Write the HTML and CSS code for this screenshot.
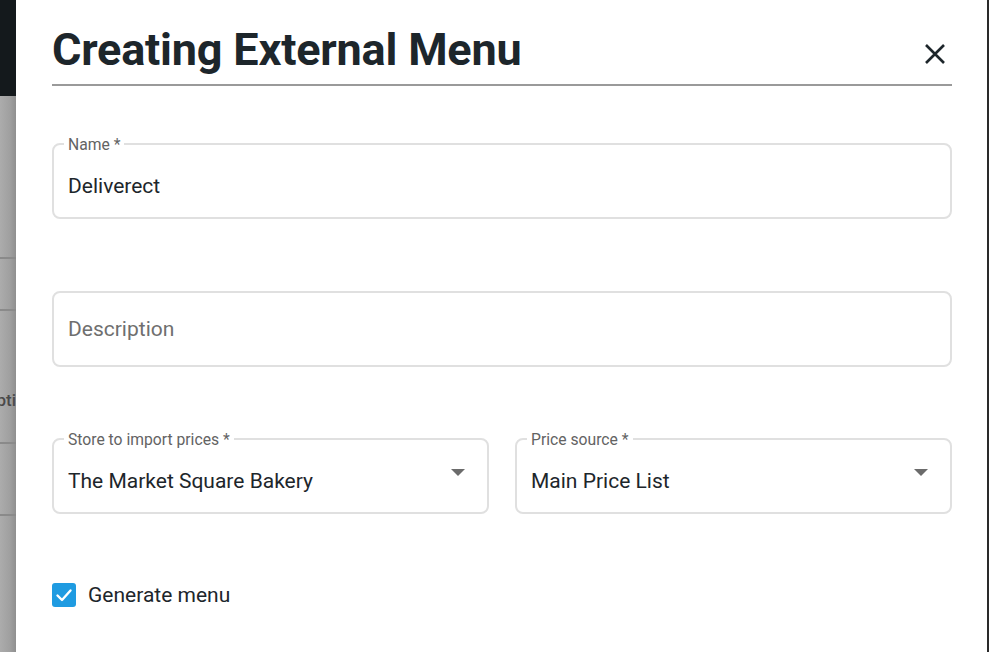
FILE: index.html
```html
<!DOCTYPE html>
<html>
<head>
<meta charset="utf-8">
<link rel="stylesheet" href="styles.css">
</head>
<body>
<div class="page">
  <div class="backdrop">
    <div class="bd-top"></div>
    <div class="bd-rest">
      <div class="bd-row r1"></div>
      <div class="bd-row r2"></div>
      <div class="bd-row r3"><span class="bd-text">pti</span></div>
      <div class="bd-row r4"></div>
      <div class="bd-row r5"></div>
    </div>
  </div>
  <div class="modal">
    <div class="header">
      <h1 class="title">Creating External Menu</h1>
      <button class="close" aria-label="Close">
        <svg width="22" height="22" viewBox="0 0 22 22"><path d="M2 2 L20 20 M20 2 L2 20" stroke="#1d262b" stroke-width="2.6" stroke-linecap="butt" fill="none"/></svg>
      </button>
    </div>
    <div class="form">
      <div class="field filled">
        <span class="label">Name *</span>
        <span class="value">Deliverect</span>
      </div>
      <div class="field">
        <span class="placeholder">Description</span>
      </div>
      <div class="row">
        <div class="field filled select">
          <span class="label">Store to import prices *</span>
          <span class="value">The Market Square Bakery</span>
          <span class="arrow"></span>
        </div>
        <div class="field filled select">
          <span class="label">Price source *</span>
          <span class="value">Main Price List</span>
          <span class="arrow"></span>
        </div>
      </div>
      <label class="check">
        <span class="box">
          <svg width="24" height="24" viewBox="0 0 24 24"><path d="M5.5 12.5 L10 17 L18.5 7.5" stroke="#fff" stroke-width="2.4" fill="none" stroke-linecap="round" stroke-linejoin="round"/></svg>
        </span>
        <span class="check-text">Generate menu</span>
      </label>
    </div>
  </div>
  <div class="edge"></div>
</div>
</body>
</html>
```
FILE: styles.css
```css
* { box-sizing: border-box; }
html, body { margin: 0; padding: 0; }
body {
  width: 990px;
  height: 652px;
  overflow: hidden;
  font-family: Roboto, "Liberation Sans", sans-serif;
  background: #fff;
}
.page {
  display: flex;
  height: 652px;
}
.backdrop {
  width: 16px;
  flex: none;
  display: flex;
  flex-direction: column;
  overflow: hidden;
}
.bd-top {
  height: 96px;
  background: #14191c;
}
.bd-rest {
  flex: 1;
  background: linear-gradient(to right, #acacac, #a0a0a0 60%, #8f8f8f);
  display: flex;
  flex-direction: column;
}
.bd-row {
  border-bottom: 2px solid #8a8a8a;
  position: relative;
}
.r1 { height: 163px; }
.r2 { height: 52px; }
.r3 { height: 133px; }
.r4 { height: 72px; }
.r5 { height: 0; border: none; }
.bd-text {
  position: absolute;
  right: 0;
  top: 79px;
  font-size: 17px;
  font-weight: 500;
  color: #4a4a4a;
  line-height: 20px;
}
.modal {
  width: 971px;
  flex: none;
  background: #fff;
  padding: 0 35px 0 36px;
}
.edge {
  width: 2px;
  flex: none;
  background: #2a2a2a;
}
.header {
  display: flex;
  align-items: center;
  justify-content: space-between;
  border-bottom: 2px solid #9a9a9a;
  height: 86px;
  padding-top: 15px;
}
.title {
  margin: 0;
  font-size: 45px;
  font-weight: 700;
  color: #1d262b;
  letter-spacing: -0.2px;
  line-height: 52px;
}
.close {
  border: none;
  background: none;
  padding: 0;
  margin-right: 6px;
  margin-top: 8px;
  display: flex;
  cursor: pointer;
}
.form {
  padding-top: 57px;
  display: flex;
  flex-direction: column;
}
.field {
  position: relative;
  height: 76px;
  border: 2px solid #e0e0e0;
  border-radius: 8px;
  display: flex;
  align-items: center;
  padding: 0 14px;
  margin-bottom: 72px;
}
.field.filled { padding-top: 10px; }
.row {
  display: flex;
  gap: 26px;
  margin-top: -1px;
}
.row .field { flex: 1; margin-bottom: 69px; }
.label {
  position: absolute;
  left: 10px;
  top: -8px;
  padding: 0 4px;
  background: #fff;
  font-size: 15.7px;
  line-height: 16px;
  color: #636363;
}
.value {
  font-size: 21px;
  color: #1d262b;
}
.placeholder {
  font-size: 21px;
  color: #6f6f6f;
}
.arrow {
  position: absolute;
  right: 22px;
  top: 29px;
  width: 0;
  height: 0;
  border-left: 7px solid transparent;
  border-right: 7px solid transparent;
  border-top: 7px solid #6b6b6b;
}
.check {
  display: flex;
  align-items: center;
  gap: 12px;
}
.box {
  width: 24px;
  height: 24px;
  border-radius: 3px;
  background: #1f9be1;
  display: flex;
}
.check-text {
  font-size: 21px;
  color: #1d262b;
}
```
